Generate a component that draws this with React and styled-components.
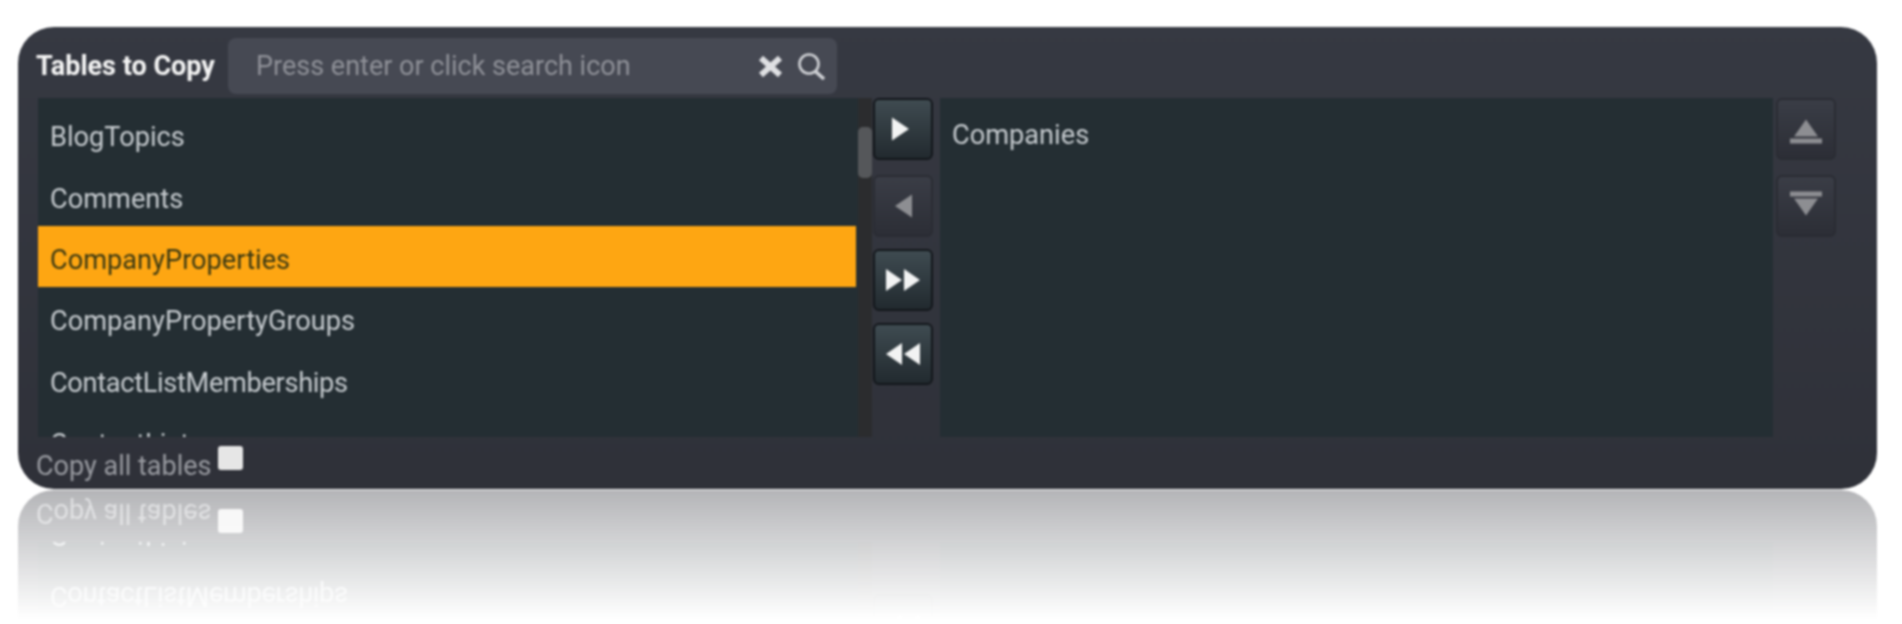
import React from 'react';
import styled, { createGlobalStyle } from 'styled-components';

const GlobalStyle = createGlobalStyle`
  html, body {
    margin: 0;
    background: #fff;
    font-family: Roboto, "Liberation Sans", sans-serif;
  }
`;

// the soft look of the whole thing sits on the wrapper, the mirror on the panel
const Page = styled.div`
  padding: 27px 25px 0 18px;
  height: 624px;
  box-sizing: border-box;
  overflow: hidden;
  filter: blur(0.8px);
`;

const Panel = styled.div`
  box-sizing: border-box;
  height: 462px;
  padding: 11px 40px 0 20px;
  border-radius: 36px;
  background: linear-gradient(#363942, #2f3139);
  -webkit-box-reflect: below 1px linear-gradient(to bottom, rgba(0, 0, 0, 0) 72%, rgba(0, 0, 0, 0.36) 100%);
`;

const Toolbar = styled.div`
  display: flex;
  align-items: center;
  height: 56px;
  margin-bottom: 4px;
`;

const Title = styled.div`
  width: 192px;
  margin-left: -2px;
  font-size: 27px;
  font-weight: 700;
  color: #f4f4f4;
  white-space: nowrap;
`;

const SearchBox = styled.div`
  display: flex;
  align-items: center;
  width: 609px;
  height: 56px;
  box-sizing: border-box;
  padding: 0 12px 0 28px;
  border-radius: 8px;
  background: #464953;
`;

const Placeholder = styled.div`
  flex: 1;
  font-size: 27px;
  color: #8f9198;
`;

const IconSlot = styled.svg`
  display: block;
  margin-left: 14px;
`;

const Body = styled.div`
  display: flex;
  height: 339px;
`;

const ListBox = styled.div`
  display: flex;
  width: ${p => p.$width}px;
  flex: none;
  overflow: hidden;
  background: #242e33;
`;

const Rows = styled.div`
  flex: 1;
  padding-top: ${p => p.$top}px;
`;

const Row = styled.div`
  display: flex;
  align-items: center;
  box-sizing: border-box;
  height: 61.4px;
  padding: 7px 0 0 12px;
  font-size: 27.2px;
  letter-spacing: ${p => p.$spacing || 0}px;
  white-space: nowrap;
  color: ${p => (p.$selected ? '#3b3912' : '#c6cbcf')};
  background: ${p => (p.$selected ? '#fea612' : 'transparent')};
`;

const Track = styled.div`
  flex: none;
  width: 14px;
  margin-left: 2px;
  padding-top: 29px;
  background: #2b2c2e;
`;

const Thumb = styled.div`
  height: 51px;
  border-radius: 5px;
  background: #55575a;
`;

const ButtonColumn = styled.div`
  display: flex;
  flex-direction: column;
  gap: 12px;
  flex: none;
  width: 60px;
  margin: ${p => p.$margin};
`;

const MoveButton = styled.div`
  display: flex;
  align-items: center;
  justify-content: center;
  box-sizing: border-box;
  width: 60px;
  height: 62px;
  border-radius: 6px;
  border: 2px solid ${p => (p.$disabled ? '#2a2c33' : '#12161a')};
  background: ${p =>
    p.$disabled
      ? 'linear-gradient(#3a3d46, #2c2e36)'
      : 'linear-gradient(#3f4b51, #222a2f)'};
  color: ${p => (p.$disabled ? '#8d8e92' : '#f2f3f3')};

  &:nth-child(2) {
    margin-top: 3px;
  }
`;

const Footer = styled.div`
  display: flex;
  align-items: flex-start;
  gap: 7px;
  margin-left: -2px;
  padding-top: 9px;
`;

const FooterLabel = styled.div`
  font-size: 27px;
  line-height: 30px;
  margin-top: 5px;
  color: #999ba1;
`;

const CheckBox = styled.div`
  width: 25px;
  height: 24px;
  border-radius: 3px;
  background: #e6e6e6;
`;

const Arrow = ({ d, w = 34, h = 26 }) => (
  <svg width={w} height={h} viewBox={`0 0 ${w} ${h}`} fill="currentColor">
    <path d={d} />
  </svg>
);

const tables = [
  { name: 'BlogTopics' },
  { name: 'Comments' },
  { name: 'CompanyProperties' },
  { name: 'CompanyPropertyGroups' },
  { name: 'ContactListMemberships', spacing: -0.33 },
  { name: 'ContactLists' },
];

export default function App() {
  return (
    <Page>
      <GlobalStyle />
      <Panel>
        <Toolbar>
          <Title>Tables to Copy</Title>
          <SearchBox>
            <Placeholder>Press enter or click search icon</Placeholder>
            <IconSlot width="25" height="21" viewBox="0 0 25 21" stroke="#dfe0e3" strokeWidth="6" strokeLinecap="butt">
              <path d="M3 2 L22 19 M22 2 L3 19" />
            </IconSlot>
            <IconSlot width="28" height="27" viewBox="0 0 28 27" fill="none" stroke="#cfd1d5" strokeWidth="2.6">
              <circle cx="12" cy="11" r="9.5" />
              <path d="M18 18 L27 26" strokeWidth="3.6" />
            </IconSlot>
          </SearchBox>
        </Toolbar>
        <Body>
          <ListBox $width={834}>
            <Rows $top={5}>
              {tables.map(t => (
                <Row key={t.name} $selected={t.name === 'CompanyProperties'} $spacing={t.spacing}>{t.name}</Row>
              ))}
            </Rows>
            <Track><Thumb /></Track>
          </ListBox>
          <ButtonColumn $margin="0 7px 0 1px">
            <MoveButton><Arrow d="M6 1.5 L23 13 L6 24.5 Z" /></MoveButton>
            <MoveButton $disabled><Arrow d="M26 1.5 L9 13 L26 24.5 Z" /></MoveButton>
            <MoveButton><Arrow d="M0 2 L16 13 L0 24 Z M18 2 L34 13 L18 24 Z" /></MoveButton>
            <MoveButton><Arrow d="M34 2 L18 13 L34 24 Z M16 2 L0 13 L16 24 Z" /></MoveButton>
          </ButtonColumn>
          <ListBox $width={833}>
            <Rows $top={3}>
              <Row>Companies</Row>
            </Rows>
          </ListBox>
          <ButtonColumn $margin="0 0 0 3px">
            <MoveButton $disabled><Arrow h={30} d="M17 5.5 L29 22.5 L5 22.5 Z M1 24.5 H33 V29.5 H1 Z" /></MoveButton>
            <MoveButton $disabled><Arrow h={30} d="M1 0.5 H33 V5.5 H1 Z M5 7.5 H29 L17 24.5 Z" /></MoveButton>
          </ButtonColumn>
        </Body>
        <Footer>
          <FooterLabel>Copy all tables</FooterLabel>
          <CheckBox />
        </Footer>
      </Panel>
    </Page>
  );
}
